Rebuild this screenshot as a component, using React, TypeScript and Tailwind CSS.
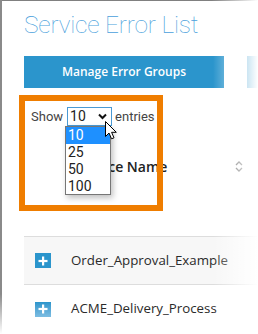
import React from "react";

function Plus({ faded }: { faded?: boolean }) {
  return (
    <div
      className={
        "w-[16px] h-[15px] flex items-center justify-center " +
        (faded ? "bg-linear-to-b from-[#2b95cc] to-[#7cbde2]" : "bg-[#2b95cc]")
      }
    >
      <svg width="10" height="10" viewBox="0 0 10 10">
        <rect x="4" y="0.5" width="2.2" height="9" fill="white" />
        <rect x="0.5" y="3.9" width="9" height="2.2" fill="white" />
      </svg>
    </div>
  );
}

export default function App() {
  return (
    <div className="relative w-[258px] h-[334px] overflow-hidden bg-white">
      <div className="pl-[24px] flex flex-col">
        {/* Title */}
        <div
          className="mt-[10px] h-[30px] leading-[30px] text-[24.5px] font-thin text-[#4a9fdc] tracking-[-0.2px] whitespace-nowrap"
          style={{ fontFamily: "Roboto, sans-serif" }}
        >
          Service Error List
        </div>

        {/* Buttons */}
        <div className="mt-[16px] flex gap-[23px]">
          <div
            className="w-[200px] h-[32px] shrink-0 bg-[#2b95cc] text-white text-[12px] font-semibold flex items-center justify-center"
            style={{ fontFamily: "'Open Sans', sans-serif" }}
          >
            Manage Error Groups
          </div>
          <div className="w-[60px] h-[32px] shrink-0 bg-[#2b95cc]" />
        </div>

        {/* Show entries */}
        <div
          className="mt-[19px] pl-[7px] h-[19px] flex items-center text-[13px] text-[#444]"
          style={{ fontFamily: "Roboto, sans-serif" }}
        >
          <span>Show</span>
          <div className="ml-[4px] w-[45px] h-[19px] border border-[#4a9ad4] flex items-center justify-between pl-[2px] pr-[4px] text-[14px] text-[#222]">
            <span>10</span>
            <svg width="9" height="7" viewBox="0 0 9 7">
              <path d="M1 1.5 L4.5 5 L8 1.5" stroke="#111" strokeWidth="2" fill="none" />
            </svg>
          </div>
          <span className="ml-[3px]">entries</span>
        </div>

        {/* Header */}
        <div className="mt-[24px] h-[32px] flex items-center pr-[15px]">
          <span
            className="pl-[51px] text-[14px] font-semibold text-[#222] whitespace-nowrap"
            style={{ fontFamily: "'Open Sans', sans-serif" }}
          >
            Service Name
          </span>
          <div className="flex-1" />
          <svg width="8" height="11" viewBox="0 0 8 11">
            <path d="M1 4 L4 1 L7 4" stroke="#555" strokeWidth="1.3" fill="none" />
            <path d="M1 7 L4 10 L7 7" stroke="#555" strokeWidth="1.3" fill="none" />
          </svg>
        </div>

        {/* Rows */}
        <div className="mt-[54px] border-t border-[#dddddd]">
          <div className="h-[48px] bg-[#f7f7f7] flex items-center pl-[11px] border-b border-[#dddddd]">
            <Plus />
            <span
              className="ml-[20px] text-[13.3px] text-[#2a2a2a] whitespace-nowrap"
              style={{ fontFamily: "'Open Sans', sans-serif" }}
            >
              Order_Approval_Example
            </span>
          </div>
          <div className="h-[48px] flex items-center pl-[11px]">
            <Plus faded />
            <span
              className="ml-[20px] text-[13.3px] text-[#2a2a2a] whitespace-nowrap"
              style={{ fontFamily: "'Open Sans', sans-serif" }}
            >
              ACME_Delivery_Process
            </span>
          </div>
        </div>
      </div>

      {/* Dropdown list overlay */}
      <div
        className="absolute left-[65px] top-[126px] w-[46px] h-[69px] bg-white border border-[#767676] shadow-[2px_3px_6px_rgba(0,0,0,0.25)] text-[14px] text-[#222] flex flex-col"
        style={{ fontFamily: "Roboto, sans-serif" }}
      >
        <div className="h-[17px] leading-[17px] pl-[2px] bg-[#1e90ff] text-white">10</div>
        <div className="h-[17px] leading-[17px] pl-[2px]">25</div>
        <div className="h-[17px] leading-[17px] pl-[2px]">50</div>
        <div className="h-[17px] leading-[17px] pl-[2px]">100</div>
      </div>

      {/* Orange highlight box */}
      <div className="absolute left-[19px] top-[95px] w-[144px] h-[116px] border-[6px] border-[#ef7d00]" />

      {/* Mouse cursor */}
      <svg className="absolute left-[105px] top-[121px]" width="13" height="19" viewBox="0 0 13 19">
        <path
          d="M0.5 0.5 L0.5 15.5 L4 12 L6.5 17.8 L9 16.8 L6.6 11.3 L11.3 11.3 Z"
          fill="white"
          stroke="black"
          strokeWidth="1"
          strokeLinejoin="round"
        />
      </svg>

      {/* Right fade */}
      <div className="absolute right-0 top-0 w-[45px] h-full bg-linear-to-r from-white/0 to-white" />

      {/* Frame borders */}
      <div className="absolute left-0 top-0 w-full h-[1px] bg-linear-to-r from-[#808080] from-[82%] to-white/0" />
      <div className="absolute left-0 top-0 w-[2px] h-full bg-linear-to-b from-[#8a8a8a] from-[88%] to-white/0" />
    </div>
  );
}
